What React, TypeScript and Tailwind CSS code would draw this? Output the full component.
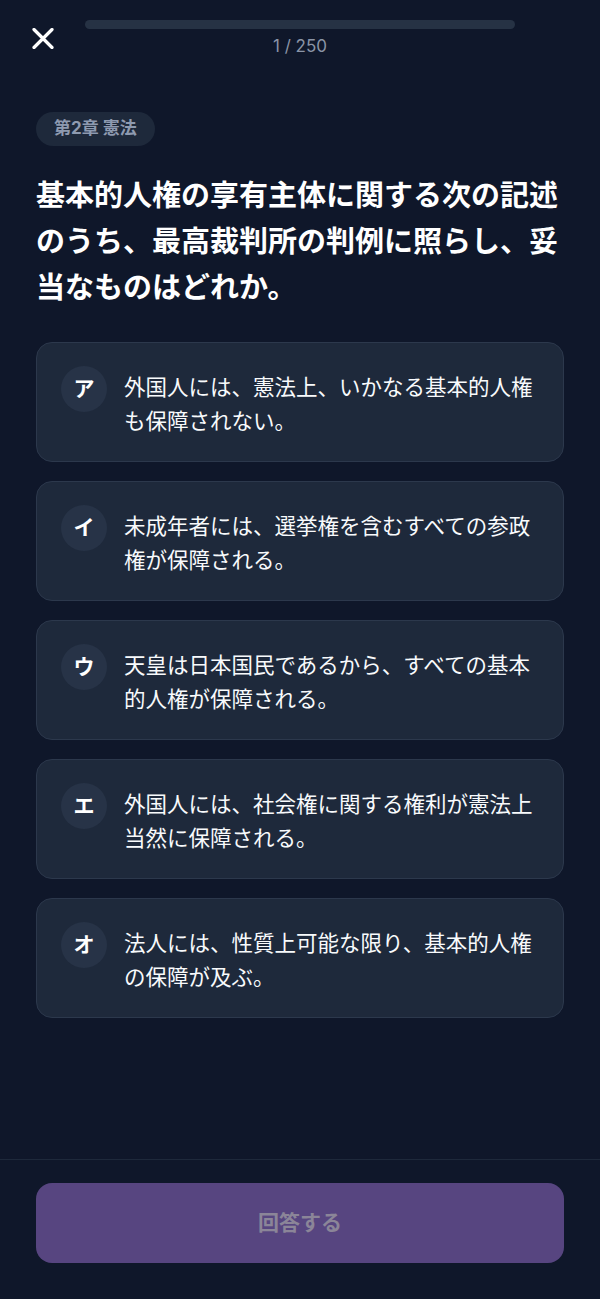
import React from "react";

const options = [
  { label: "ア", text: "外国人には、憲法上、いかなる基本的人権も保障されない。" },
  { label: "イ", text: "未成年者には、選挙権を含むすべての参政権が保障される。" },
  { label: "ウ", text: "天皇は日本国民であるから、すべての基本的人権が保障される。" },
  { label: "エ", text: "外国人には、社会権に関する権利が憲法上当然に保障される。" },
  { label: "オ", text: "法人には、性質上可能な限り、基本的人権の保障が及ぶ。" },
];

export default function App() {
  return (
    <div className="h-[1299px] bg-[#0f172a] flex flex-col font-['Inter','Noto_Sans_CJK_JP',sans-serif] text-white">
      {/* header */}
      <div className="grid grid-cols-[85px_1fr_85px] pt-[20px]">
        <div className="flex justify-center pt-[8px]">
          <svg width="22" height="21" viewBox="0 0 22 21" fill="none">
            <path
              d="M2 1.5 L20 19.5 M20 1.5 L2 19.5"
              stroke="white"
              strokeWidth="3.2"
              strokeLinecap="round"
            />
          </svg>
        </div>
        <div className="flex flex-col">
          <div className="h-[9px] rounded-full bg-[#263244]" />
          <p className="mt-[6px] text-center text-[17px] leading-[22px] text-[#8a94a6]">
            1 / 250
          </p>
        </div>
        <div />
      </div>

      {/* body */}
      <div className="px-[36px]">
        <div className="mt-[55px] inline-flex h-[34px] items-center rounded-full bg-[#1e293b] px-[18px]">
          <span className="text-[17px] font-bold text-[#8e9ab0]">第2章 憲法</span>
        </div>
        <h1 className="mt-[27px] text-[29px] font-bold leading-[46px] text-white">
          基本的人権の享有主体に関する次の記述のうち、最高裁判所の判例に照らし、妥当なものはどれか。
        </h1>
        <div className="mt-[31px] flex flex-col gap-[19px]">
          {options.map((o) => (
            <div
              key={o.label}
              className="flex items-start gap-[17px] rounded-[16px] border border-[#2c384c] bg-[#1e293b] px-[24px] py-[23px]"
            >
              <div className="flex h-[46px] w-[46px] shrink-0 items-center justify-center rounded-full bg-[#273347]">
                <span className="text-[21px] font-bold text-white">{o.label}</span>
              </div>
              <p className="mt-[4px] text-[21.5px] leading-[34px] text-[#f8fafc]">{o.text}</p>
            </div>
          ))}
        </div>
      </div>

      {/* footer */}
      <div className="mt-auto border-t border-[#1e293b] px-[36px] pt-[23px] pb-[36px]">
        <button className="flex h-[80px] w-full items-center justify-center rounded-[16px] bg-[#574580]">
          <span className="text-[21px] font-bold text-[#8b8598]">回答する</span>
        </button>
      </div>
    </div>
  );
}
